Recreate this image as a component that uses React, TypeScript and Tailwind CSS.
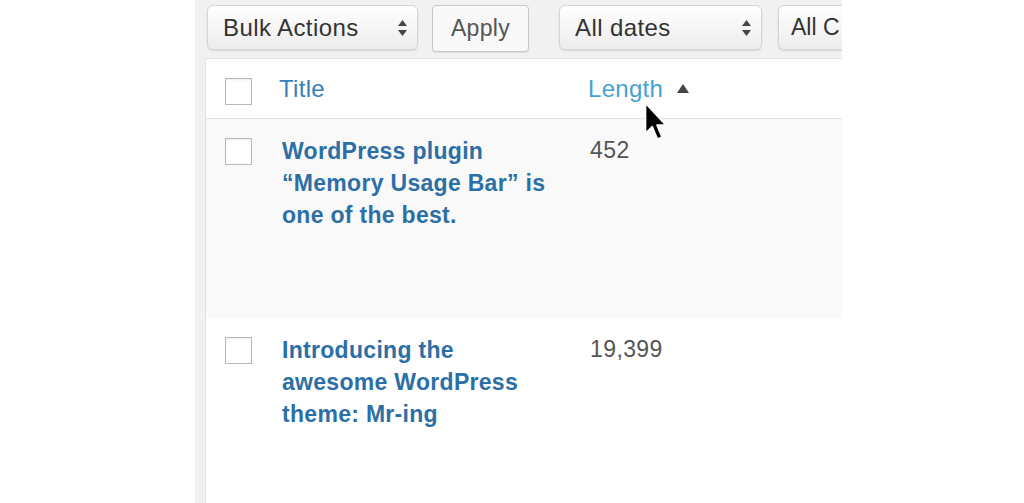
import React from "react";

const font = { fontFamily: '"Liberation Sans", Arial, sans-serif' };

function SortArrows() {
  return (
    <svg width="9" height="16" viewBox="0 0 9 16" className="shrink-0">
      <path d="M4.5 0 L9 6 L0 6 Z" fill="#444" />
      <path d="M4.5 16 L9 10 L0 10 Z" fill="#444" />
    </svg>
  );
}

function Select({ label, width, clip }: { label: string; width: string; clip?: boolean }) {
  return (
    <div
      className={`${width} h-[45px] shrink-0 flex items-center justify-between rounded-[6px] border border-[#d6d6d6] bg-gradient-to-b from-[#ffffff] to-[#ececec] shadow-[0_1px_2px_rgba(0,0,0,0.12)] text-[#333] whitespace-nowrap overflow-hidden ${clip ? "pl-[12px] rounded-r-none border-r-0 text-[23px]" : "pl-[15px] pr-[10px] text-[24px] tracking-[0.4px]"}`}
    >
      <span>{label}</span>
      {!clip && <SortArrows />}
    </div>
  );
}

function Checkbox() {
  return <div className="w-[27px] h-[27px] border border-[#b4b9be] bg-white shadow-[inset_0_1px_2px_rgba(0,0,0,0.08)]" />;
}

function Row({ lines, count, bg, height }: { lines: string[]; count: string; bg: string; height: string }) {
  return (
    <div className={`flex ${bg} ${height}`}>
      <div className="w-[73px] shrink-0 pl-[19px] pt-[19px]">
        <Checkbox />
      </div>
      <div className="w-[309px] shrink-0 pl-[3px] pt-[16px] text-[23px] tracking-[0.3px] leading-[32px] font-bold text-[#2c6fa6]">
        {lines.map((l) => (
          <div key={l} className="whitespace-nowrap">{l}</div>
        ))}
      </div>
      <div className="pt-[15px] pl-[2px] text-[23px] tracking-[0.4px] leading-[32px] text-[#555]">{count}</div>
    </div>
  );
}

export default function App() {
  return (
    <div className="relative flex w-[1024px] h-[503px] bg-white overflow-hidden" style={font}>
      <div className="w-[195px] shrink-0 bg-white" />

      <div className="w-[647px] shrink-0 bg-[#f1f1f1] flex flex-col overflow-hidden">
        <div className="h-[58px] shrink-0 flex items-start pl-[12px] pt-[5px]">
          <Select label="Bulk Actions" width="w-[211px]" />
          <div className="ml-[14px] w-[97px] h-[47px] shrink-0 flex items-center justify-center rounded-[4px] border border-[#c9c9c9] bg-[#f8f8f8] shadow-[0_1px_1px_rgba(0,0,0,0.08)] text-[23px] tracking-[0.3px] text-[#555]">
            Apply
          </div>
          <div className="ml-[30px]">
            <Select label="All dates" width="w-[203px]" />
          </div>
          <div className="ml-[16px]">
            <Select label="All C" width="w-[64px]" clip />
          </div>
        </div>

        <div className="flex-1 ml-[10px] bg-white border-l border-[#e3e3e3] flex flex-col">
          <div className="h-[61px] shrink-0 flex items-center border-t border-b border-[#e1e1e1]">
            <div className="w-[73px] shrink-0 pl-[19px] pt-[5px] flex items-center">
              <Checkbox />
            </div>
            <div className="w-[309px] shrink-0 text-[24px] tracking-[0.3px] text-[#3580bd]">Title</div>
            <div className="flex items-center gap-[14px] text-[24px] tracking-[0.3px] text-[#45a2cf]">
              <span>Length</span>
              <svg width="12" height="9" viewBox="0 0 12 9">
                <path d="M6 0 L12 9 L0 9 Z" fill="#444" />
              </svg>
            </div>
          </div>

          <Row
            lines={["WordPress plugin", "\u201cMemory Usage Bar\u201d is", "one of the best."]}
            count="452"
            bg="bg-[#f9f9f9]"
            height="h-[199px]"
          />
          <Row
            lines={["Introducing the", "awesome WordPress", "theme: Mr-ing"]}
            count="19,399"
            bg="bg-white"
            height="flex-1"
          />
        </div>
      </div>

      <div className="flex-1 bg-white" />

      <svg
        className="absolute left-[644px] top-[102px]"
        width="24"
        height="40"
        viewBox="0 0 16 27"
      >
        <path
          d="M1 1 L1 21 L5.5 16.5 L9 25 L12 23.8 L8.6 15.5 L14.5 15.5 Z"
          fill="#000"
          stroke="#fff"
          strokeWidth="1"
          strokeLinejoin="round"
        />
      </svg>
    </div>
  );
}
